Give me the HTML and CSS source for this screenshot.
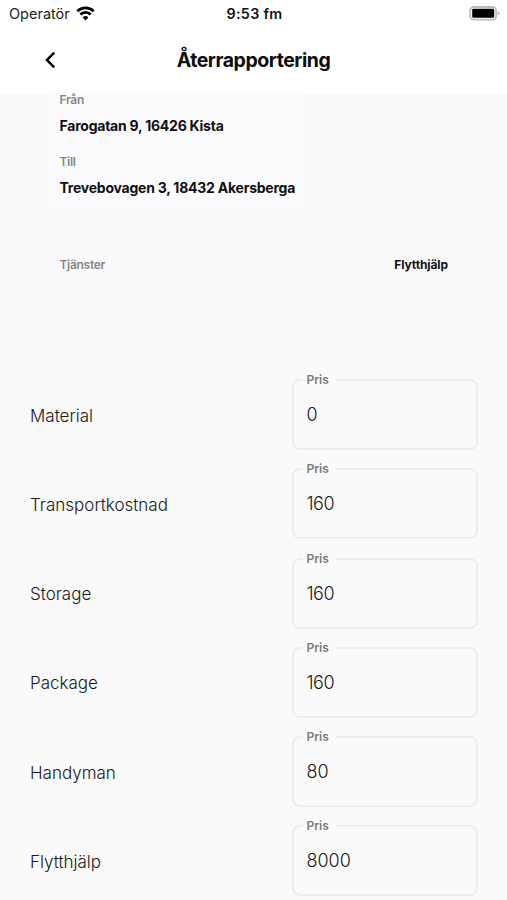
FILE: index.html
```html
<!DOCTYPE html>
<html lang="sv">
<head>
<meta charset="utf-8">
<meta name="viewport" content="width=device-width, initial-scale=1">
<title>Återrapportering</title>
<link rel="stylesheet" href="styles.css">
</head>
<body>
<div class="status">
  <div class="carrier"><span class="carrier-name">Operatör</span>
    <svg class="wifi" width="19" height="15" viewBox="0 0 19 15" fill="none" stroke="#000" stroke-width="2.6"><path d="M1.3 5.2a11.7 11.7 0 0 1 16.4 0"/><path d="M4.3 8.5a7.4 7.4 0 0 1 10.4 0"/><path d="M9.5 14.5 6.6 11.4a4.2 4.2 0 0 1 5.8 0Z" fill="#000" stroke="none"/></svg>
  </div>
  <span class="time">9:53 fm</span>
  <svg class="battery" width="31" height="15" viewBox="0 0 31 15"><rect x="1.2" y="1" width="26" height="12.6" rx="3.6" fill="#fff" stroke="#bcbcbc" stroke-width="1.8"/><rect x="3.2" y="2.8" width="22" height="9" rx="1.4"/><path d="M28.8 5.2q1.8.7 1.8 2.1t-1.8 2.1Z" fill="#b5b5b5"/></svg>
</div>
<header class="header">
  <svg class="back" width="12" height="18" viewBox="0 0 12 18" fill="none" stroke="#000" stroke-width="2.5"><path d="M10.2 1.6 3 9l7.2 7.4"/></svg>
  <h1 class="title">Återrapportering</h1>
</header>
<main class="content">
  <section class="card">
    <div class="addresses">
      <div class="caption from">Från</div>
      <div class="address">Farogatan 9, 16426 Kista</div>
      <div class="caption to">Till</div>
      <div class="address">Trevebovagen 3, 18432 Akersberga</div>
    </div>
    <div class="services"><span class="caption">Tjänster</span><span class="service">Flytthjälp</span></div>
  </section>
  <div class="rows">
    <div class="row"><span class="name">Material</span><fieldset class="field"><legend>Pris</legend><span class="value">0</span></fieldset></div>
    <div class="row"><span class="name">Transportkostnad</span><fieldset class="field"><legend>Pris</legend><span class="value narrow">160</span></fieldset></div>
    <div class="row"><span class="name">Storage</span><fieldset class="field"><legend>Pris</legend><span class="value narrow">160</span></fieldset></div>
    <div class="row"><span class="name">Package</span><fieldset class="field"><legend>Pris</legend><span class="value narrow">160</span></fieldset></div>
    <div class="row"><span class="name">Handyman</span><fieldset class="field"><legend>Pris</legend><span class="value">80</span></fieldset></div>
    <div class="row"><span class="name">Flytthjälp</span><fieldset class="field"><legend>Pris</legend><span class="value">8000</span></fieldset></div>
  </div>
</main>
</body>
</html>
```
FILE: styles.css
```css
* { box-sizing: border-box; }
body { margin: 0; height: 900px; overflow: hidden; background: #fff; color: #111; font-family: Inter, "Liberation Sans", sans-serif; white-space: nowrap; }
.status { display: grid; grid-template-columns: 1fr auto 1fr; align-items: center; height: 27px; padding: 0 7px 0 9px; line-height: 20px; }
.carrier { display: flex; align-items: center; gap: 6px; color: #222; }
.carrier-name { font-size: 14.5px; }
.wifi { margin-bottom: 1px; }
.time { font-size: 14.3px; font-weight: 600; letter-spacing: 0.3px; }
.battery { justify-self: end; }
.header { display: grid; grid-template-columns: 1fr auto 1fr; align-items: center; height: 67px; padding-bottom: 2px; }
.back { margin-left: 44px; }
.title { margin: 0; font-size: 19.5px; line-height: 26px; font-weight: 700; letter-spacing: -0.45px; color: #0c0c0c; }
.content { height: 806px; background: #fafafa; }
.card { height: 208px; margin: 0 27px 0 32px; background: #fafafc; }
.addresses { width: 256px; height: 114px; margin-left: 16px; padding-left: 11.5px; background: #fbfbfd; }
.caption { font-size: 12px; line-height: 14px; font-weight: 600; letter-spacing: -0.3px; color: #858585; }
.from { height: 22px; line-height: 12px; }
.address { height: 20px; line-height: 20px; font-size: 14px; font-weight: 700; letter-spacing: -0.23px; color: #101010; }
.to { margin-top: 19px; height: 23px; }
.services { display: flex; justify-content: space-between; margin: 50px 32px 0 27.5px; line-height: 14px; }
.service { font-size: 12px; font-weight: 700; letter-spacing: -0.1px; }
.rows { display: flex; flex-direction: column; gap: 12.2px; padding: 71.3px 29px 0 30px; }
.row { display: flex; justify-content: space-between; align-items: center; height: 77px; }
.name { padding-top: 8px; font-size: 17px; line-height: 22px; font-weight: 300; color: #181818; }
.field { width: 186.5px; height: 77px; margin: 0; padding: 0 9px; border: 2px solid #ededed; border-radius: 8px; }
.field legend { margin: 0; padding: 0 7px 0 4px; font-size: 12px; line-height: 14px; font-weight: 600; color: #7a7a7a; }
.value { display: block; margin-top: 17px; padding-left: 4px; font-size: 18px; line-height: 22px; font-weight: 300; color: #181818; }
.narrow { letter-spacing: -0.5px; }
```
